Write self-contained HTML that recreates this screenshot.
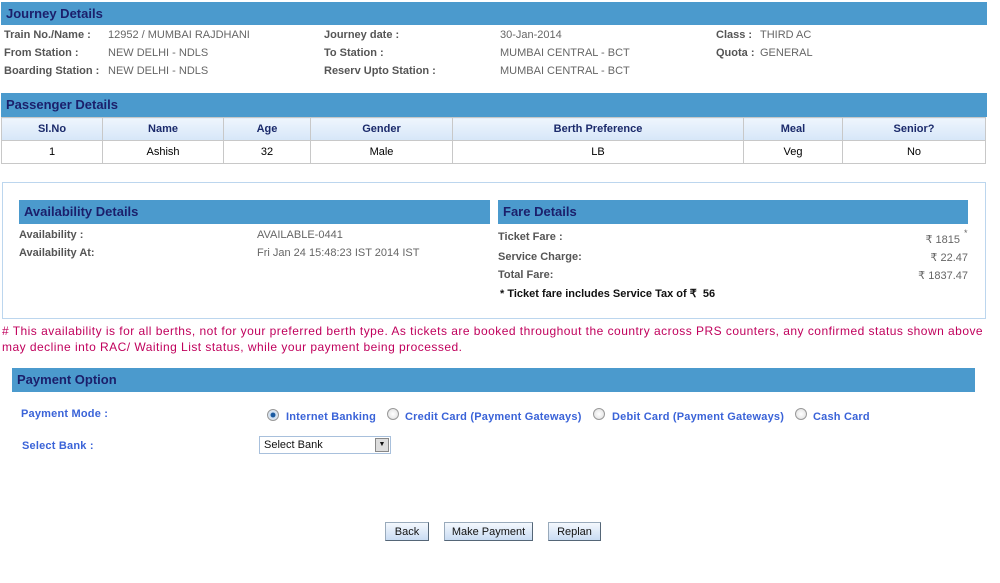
<!DOCTYPE html>
<html><head><meta charset="utf-8"><style>
body{margin:0;width:1000px;height:583px;background:#fff;font-family:"Liberation Sans",Arial,sans-serif;font-size:11px;position:relative;overflow:hidden}
.a{position:absolute;white-space:nowrap}
.bar{position:absolute;background:#4b9acd;color:#1b1f6b;font-weight:bold;font-size:13px;line-height:23px;padding-left:5px;box-sizing:border-box}
.l{color:#555;font-weight:bold}
.v{color:#666}
table{position:absolute;left:1px;top:117px;width:985px;border-collapse:collapse}
td{border:1px solid #c8c8c8;text-align:center;height:22px;padding:0;font-size:11px}
tr.h td{background:linear-gradient(#eef5fd,#d6e6f8);color:#1b2a6b;font-weight:bold}
.red{color:#c0005c;font-size:12px;letter-spacing:0.47px}
.blue{color:#3a63d8;font-weight:bold;letter-spacing:0.2px}
.rad{position:absolute;width:10px;height:10px;border-radius:50%;border:1px solid #999;background:radial-gradient(#fff,#ddd)}
.btn{position:absolute;height:19px;line-height:19px;text-align:center;background:linear-gradient(#f4f8fd,#c9dcf3);border:1px solid #9ab;border-right-color:#567;border-bottom-color:#567;color:#111;font-size:11px;box-sizing:border-box}
</style></head><body>
<div class="bar" style="left:1px;top:2px;width:986px;height:23px">Journey Details</div>
<div class="a l" style="left:4px;top:29px">Train No./Name :</div><div class="a v" style="left:108px;top:29px">12952 / MUMBAI RAJDHANI</div>
<div class="a l" style="left:324px;top:29px">Journey date :</div><div class="a v" style="left:500px;top:29px">30-Jan-2014</div>
<div class="a l" style="left:716px;top:29px">Class :</div><div class="a v" style="left:760px;top:29px">THIRD AC</div>
<div class="a l" style="left:4px;top:47px">From Station :</div><div class="a v" style="left:108px;top:47px">NEW DELHI - NDLS</div>
<div class="a l" style="left:324px;top:47px">To Station :</div><div class="a v" style="left:500px;top:47px">MUMBAI CENTRAL - BCT</div>
<div class="a l" style="left:716px;top:47px">Quota :</div><div class="a v" style="left:760px;top:47px">GENERAL</div>
<div class="a l" style="left:4px;top:65px">Boarding Station :</div><div class="a v" style="left:108px;top:65px">NEW DELHI - NDLS</div>
<div class="a l" style="left:324px;top:65px">Reserv Upto Station :</div><div class="a v" style="left:500px;top:65px">MUMBAI CENTRAL - BCT</div>
<div class="bar" style="left:1px;top:93px;width:986px;height:24px">Passenger Details</div>
<table><tr class="h"><td style="width:100px">Sl.No</td><td style="width:120px">Name</td><td style="width:86px">Age</td><td style="width:141px">Gender</td><td style="width:290px">Berth Preference</td><td style="width:98px">Meal</td><td>Senior?</td></tr>
<tr><td>1</td><td>Ashish</td><td>32</td><td>Male</td><td>LB</td><td>Veg</td><td>No</td></tr></table>
<div class="a" style="left:2px;top:182px;width:982px;height:135px;border:1px solid #bcd6ee"></div>
<div class="bar" style="left:19px;top:200px;width:471px;height:24px">Availability Details</div>
<div class="bar" style="left:498px;top:200px;width:470px;height:24px">Fare Details</div>
<div class="a l" style="left:19px;top:229px">Availability :</div><div class="a v" style="left:257px;top:229px">AVAILABLE-0441</div>
<div class="a l" style="left:19px;top:247px">Availability At:</div><div class="a v" style="left:257px;top:247px">Fri Jan 24 15:48:23 IST 2014 IST</div>
<div class="a l" style="left:498px;top:231px">Ticket Fare :</div><div class="a v" style="right:40px;top:233px">₹ 1815</div><div class="a v" style="left:964px;top:228px;font-size:9px">*</div>
<div class="a l" style="left:498px;top:251px">Service Charge:</div><div class="a v" style="right:32px;top:251px">₹ 22.47</div>
<div class="a l" style="left:498px;top:269px">Total Fare:</div><div class="a v" style="right:32px;top:269px">₹ 1837.47</div>
<div class="a" style="left:500px;top:287px;font-weight:bold;color:#111">* Ticket fare includes Service Tax of ₹ &nbsp;56</div>
<div class="a red" style="left:2px;top:324px">#  This availability is for all berths, not for your preferred berth type. As tickets are booked throughout the country across PRS counters, any confirmed status shown above</div>
<div class="a red" style="left:2px;top:340px">may decline into RAC/ Waiting List status, while your payment being processed.</div>
<div class="bar" style="left:12px;top:368px;width:963px;height:24px;padding-left:5px">Payment Option</div>
<div class="a blue" style="left:21px;top:408px">Payment Mode :</div>
<div class="rad" style="left:267px;top:409px;background:radial-gradient(#1a5aa0 30%,#cfe0f2 40%,#eee)"></div><div class="a blue" style="left:286px;top:411px">Internet Banking</div>
<div class="rad" style="left:387px;top:408px"></div><div class="a blue" style="left:405px;top:411px">Credit Card (Payment Gateways)</div>
<div class="rad" style="left:593px;top:408px"></div><div class="a blue" style="left:612px;top:411px">Debit Card (Payment Gateways)</div>
<div class="rad" style="left:795px;top:408px"></div><div class="a blue" style="left:813px;top:411px">Cash Card</div>
<div class="a blue" style="left:22px;top:440px">Select Bank :</div>
<div class="a" style="left:259px;top:436px;width:132px;height:18px;border:1px solid #a8c0dc;box-sizing:border-box;font-size:11px;line-height:16px;padding-left:4px;color:#111">Select Bank<div style="position:absolute;right:1px;top:1px;width:14px;height:14px;background:#ddd;border:1px solid #888;box-sizing:border-box;font-size:7px;line-height:12px;text-align:center">▼</div></div>
<div class="btn" style="left:385px;top:522px;width:44px">Back</div>
<div class="btn" style="left:444px;top:522px;width:89px">Make Payment</div>
<div class="btn" style="left:548px;top:522px;width:53px">Replan</div>
</body></html>
